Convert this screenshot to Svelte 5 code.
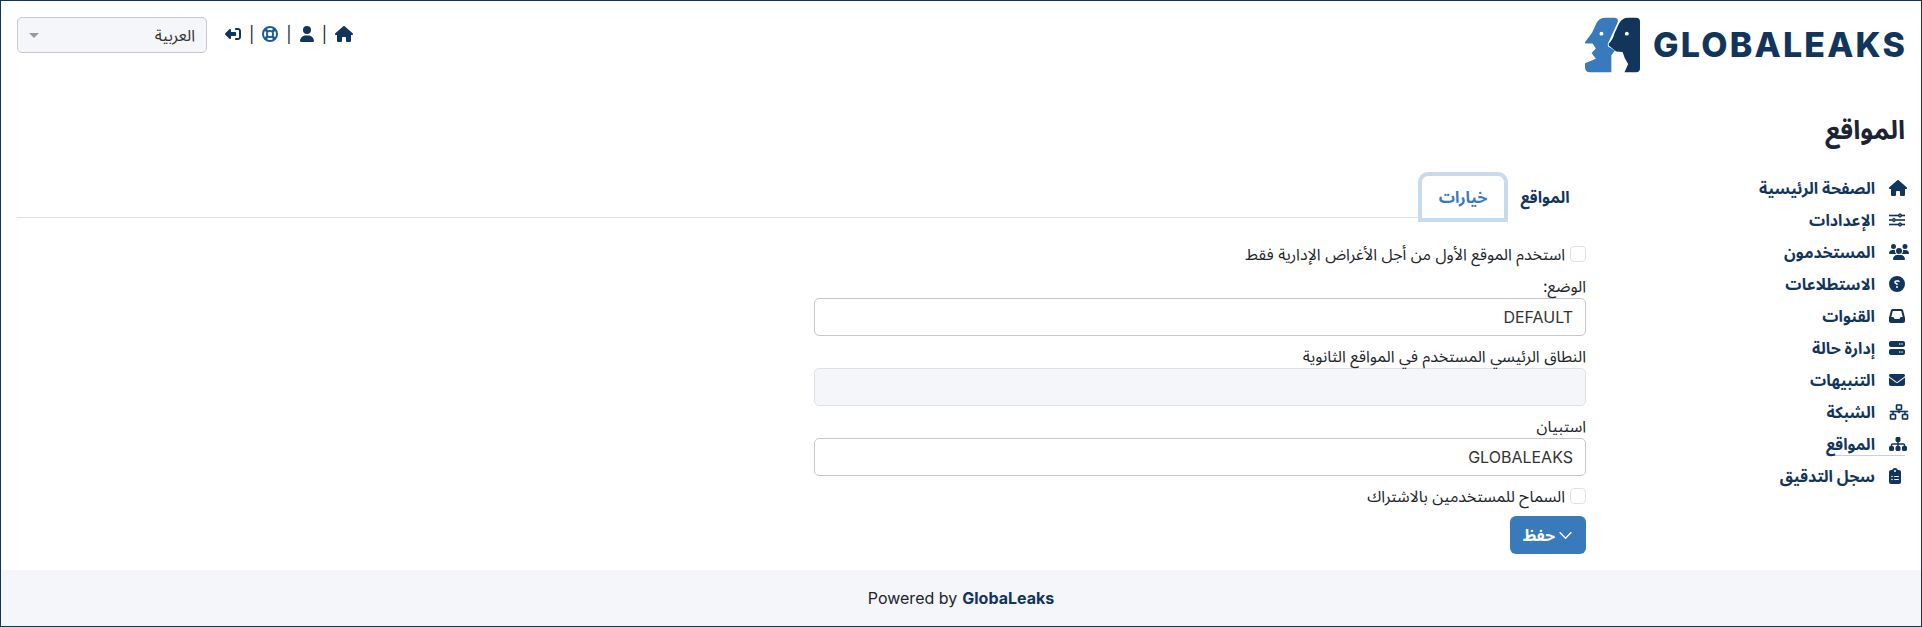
<script>
	const icons = {
		home: {vb: '0 0 576 512', d: 'M575.8 255.5c0 18-15 32.1-32 32.1h-32l.7 160.2c0 2.7-.2 5.4-.5 8.1V472c0 22.1-17.9 40-40 40H392c-22.1 0-40-17.9-40-40V384c0-17.7-14.3-32-32-32H256c-17.7 0-32 14.3-32 32v88c0 22.1-17.9 40-40 40H104c-22.1 0-40-17.9-40-40V287.6H32c-18 0-32-14-32-32.1c0-9 3-17 10-24L266.4 8c7-7 15-8 22-8s15 2 21 7L564.8 231.5c8 7 12 15 11 24z'},
		user: {vb: '0 0 448 512', d: 'M224 256A128 128 0 1 0 224 0a128 128 0 1 0 0 256zm-45.7 48C79.8 304 0 383.8 0 482.3C0 498.7 13.3 512 29.7 512H418.3c16.4 0 29.7-13.3 29.7-29.7C448 383.8 368.2 304 269.7 304H178.3z'},
		envelope: {vb: '0 0 512 512', d: 'M48 64C21.5 64 0 85.5 0 112c0 15.1 7.1 29.3 19.2 38.4L236.8 313.6c11.4 8.5 27 8.5 38.4 0L492.8 150.4c12.1-9.1 19.2-23.3 19.2-38.4c0-26.5-21.5-48-48-48H48zM0 176V384c0 35.3 28.7 64 64 64H448c35.3 0 64-28.7 64-64V176L294.4 339.2c-22.8 17.1-54 17.1-76.8 0L0 176z'},
		signin: {vb: '0 0 512 512', d: 'M138 105L10 233c-13 13-13 33 0 46l128 128c9 9 23 12 35 7s20-17 20-30V320h130c18 0 32-14 32-32V224c0-18-14-32-32-32H193V128c0-13-8-25-20-30s-26-2-35 7zM352 64h64c53 0 96 43 96 96V352c0 53-43 96-96 96H352c-18 0-32-14-32-32s14-32 32-32h64c18 0 32-14 32-32V160c0-18-14-32-32-32H352c-18 0-32-14-32-32s14-32 32-32z'},
		lifering: {vb: '0 0 512 512', d: 'M256 0a256 256 0 1 0 0 512A256 256 0 1 0 256 0zm0 64c37 0 71 10 100 29l-47 47c-16-8-34-12-53-12s-37 4-53 12l-47-47c29-19 63-29 100-29zM93 156l47 47c-8 16-12 34-12 53s4 37 12 53l-47 47C74 327 64 293 64 256s10-71 29-100zm326 0c19 29 29 63 29 100s-10 71-29 100l-47-47c8-16 12-34 12-53s-4-37-12-53l47-47zM256 184a72 72 0 1 1 0 144 72 72 0 1 1 0-144zm-53 188c16 8 34 12 53 12s37-4 53-12l47 47c-29 19-63 29-100 29s-71-10-100-29l47-47z'},
		sliders: {vb: '0 0 512 512', thick: true, d: 'M0 96h300a56 56 0 0 1 108 0h104v32H408a56 56 0 0 1-108 0H0V96zm354-8a24 24 0 1 0 0 48 24 24 0 1 0 0-48zM0 240h104a56 56 0 0 1 108 0h300v32H212a56 56 0 0 1-108 0H0v-32zm158-8a24 24 0 1 0 0 48 24 24 0 1 0 0-48zM0 384h300a56 56 0 0 1 108 0h104v32H408a56 56 0 0 1-108 0H0v-32zm354-8a24 24 0 1 0 0 48 24 24 0 1 0 0-48z'},
		users: {vb: '0 0 640 512', d: 'M144 0a80 80 0 1 1 0 160A80 80 0 1 1 144 0zM512 0a80 80 0 1 1 0 160A80 80 0 1 1 512 0zM0 298.700C0 239.800 47.800 192 106.700 192h42.700c15.900 0 31 3.500 44.600 9.700c-1.300 7.200-1.900 14.700-1.900 22.300c0 38.200 16.800 72.500 43.300 96H21.300C9.600 320 0 310.400 0 298.700zM405.300 320c26.500-23.500 43.300-57.800 43.300-96c0-7.600-.7-15-1.900-22.300c13.600-6.300 28.700-9.700 44.600-9.700h42.700C592.200 192 640 239.800 640 298.700c0 11.800-9.600 21.300-21.300 21.300H405.300zM224 224a96 96 0 1 1 192 0 96 96 0 1 1-192 0zM128 485.300C128 411.700 187.700 352 261.300 352H378.700C452.300 352 512 411.700 512 485.300c0 14.700-11.900 26.700-26.700 26.700H154.700c-14.700 0-26.700-11.900-26.700-26.700z'},
		question: {vb: '0 0 512 512', mirror: true, d: 'M256 512A256 256 0 1 0 256 0a256 256 0 1 0 0 512zM170 170c8-22 29-37 53-37h58c35 0 63 28 63 63c0 23-12 44-32 55l-32 19c0 13-11 24-24 24c-13 0-24-11-24-24V256c0-9 5-17 12-21l44-25c5-3 8-8 8-14c0-9-7-16-16-16H223c-3 0-6 2-8 5l-1 1c-4 13-18 19-30 15s-19-18-15-30zM224 352a32 32 0 1 1 64 0 32 32 0 1 1-64 0z'},
		inbox: {vb: '0 0 512 512', d: 'M121 32C91 32 66 52 59 81L1 314c-1 5-1 10-1 15V416c0 35 29 64 64 64H448c35 0 64-29 64-64V329c0-5-1-10-2-15L453 81c-7-29-33-49-62-49H121zm0 64H391l48 192H387c-12 0-23 7-29 18l-14 28c-6 11-17 18-29 18H197c-12 0-23-7-29-18l-14-28c-6-11-17-18-29-18H73L121 96z'},
		server: {vb: '0 0 512 512', d: 'M64 32C29 32 0 61 0 96v64c0 35 29 64 64 64H448c35 0 64-29 64-64V96c0-35-29-64-64-64H64zm280 72a24 24 0 1 1 0 48 24 24 0 1 1 0-48zm48 24a24 24 0 1 1 48 0 24 24 0 1 1-48 0zM64 288c-35 0-64 29-64 64v64c0 35 29 64 64 64H448c35 0 64-29 64-64V352c0-35-29-64-64-64H64zm280 72a24 24 0 1 1 0 48 24 24 0 1 1 0-48zm48 24a24 24 0 1 1 48 0 24 24 0 1 1-48 0z'},
		network: {vb: '0 0 640 512', thick: true, d: 'M256 16h128c18 0 32 14 32 32v112c0 18-14 32-32 32H336v32H592c9 0 16 7 16 16s-7 16-16 16H528v64h48c18 0 32 14 32 32v112c0 18-14 32-32 32H448c-18 0-32-14-32-32V352c0-18 14-32 32-32h48V256H336v32h-32V256H144v64h48c18 0 32 14 32 32v112c0 18-14 32-32 32H64c-18 0-32-14-32-32V352c0-18 14-32 32-32h48V256H48c-9 0-16-7-16-16s7-16 16-16H304V192H256c-18 0-32-14-32-32V48c0-18 14-32 32-32zm0 32v112H384V48H256zM64 352v112H192V352H64zm384 0v112H576V352H448z'},
		sitemap: {vb: '0 0 576 512', d: 'M208 80c0-26.500 21.500-48 48-48h64c26.500 0 48 21.500 48 48v64c0 26.500-21.500 48-48 48h-8v40H464c30.900 0 56 25.100 56 56v32h8c26.500 0 48 21.500 48 48v64c0 26.500-21.500 48-48 48H464c-26.500 0-48-21.500-48-48V368c0-26.500 21.500-48 48-48h8V288c0-4.400-3.600-8-8-8H312v40h8c26.500 0 48 21.500 48 48v64c0 26.500-21.500 48-48 48H256c-26.500 0-48-21.500-48-48V368c0-26.500 21.500-48 48-48h8V280H112c-4.400 0-8 3.600-8 8v32h8c26.500 0 48 21.500 48 48v64c0 26.500-21.500 48-48 48H48c-26.500 0-48-21.500-48-48V368c0-26.500 21.500-48 48-48h8V288c0-30.900 25.100-56 56-56H264V192h-8c-26.500 0-48-21.500-48-48V80z'},
		clipboard: {vb: '0 0 384 512', d: 'M192 0c-41.800 0-77.400 26.700-90.500 64H64C28.700 64 0 92.700 0 128V448c0 35.300 28.700 64 64 64H320c35.300 0 64-28.700 64-64V128c0-35.300-28.700-64-64-64H282.500C269.400 26.700 233.800 0 192 0zm0 64a32 32 0 1 1 0 64 32 32 0 1 1 0-64zM72 272a24 24 0 1 1 48 0 24 24 0 1 1-48 0zm104-16H304c8.800 0 16 7.200 16 16s-7.200 16-16 16H176c-8.800 0-16-7.200-16-16s7.200-16 16-16zM72 368a24 24 0 1 1 48 0 24 24 0 1 1-48 0zm88 0c0-8.800 7.200-16 16-16H304c8.800 0 16 7.200 16 16s-7.200 16-16 16H176c-8.800 0-16-7.200-16-16z'}
	};

	const navItems = [
		{label: 'الصفحة الرئيسية', icon: 'home'},
		{label: 'الإعدادات', icon: 'sliders'},
		{label: 'المستخدمون', icon: 'users'},
		{label: 'الاستطلاعات', icon: 'question'},
		{label: 'القنوات', icon: 'inbox'},
		{label: 'إدارة حالة', icon: 'server'},
		{label: 'التنبيهات', icon: 'envelope'},
		{label: 'الشبكة', icon: 'network'},
		{label: 'المواقع', icon: 'sitemap', active: true},
		{label: 'سجل التدقيق', icon: 'clipboard'}
	];

	const topLinks = ['home', 'user', 'lifering', 'signin'];
</script>

{#snippet icon(name, cls)}
	<svg class={cls} class:thick={icons[name].thick} class:mirror={icons[name].mirror} viewBox={icons[name].vb} aria-hidden="true"><path d={icons[name].d} /></svg>
{/snippet}

<div class="page" dir="rtl">
	<header class="header">
		<div class="logo" dir="ltr">
			<svg class="mark" viewBox="15 22 167 165" aria-hidden="true">
				<path fill="#387abb" d="M78 22H104Q118 22 114 36L88 92Q78 108 92 113L106 121 95 136V187H30Q15 187 15 172V160L48 146 35 129 48 115 38 100H19Q12 100 17 93L36 68 50 38Q58 22 78 22Z" />
				<path fill="#12355b" d="M146 22H170Q182 22 182 34V175Q182 187 170 187H135L146 162 136 145 129 126 110 124 87 106V100Q100 88 104 70L118 40Q128 22 146 22Z" />
				<circle fill="#fff" cx="65" cy="70" r="6" />
				<circle fill="#fff" cx="142" cy="70" r="6" />
			</svg>
			<span class="wordmark">GLOBALEAKS</span>
		</div>
		<div class="toolbar">
			<nav class="top-links">
				{#each topLinks as link, i}
					{#if i > 0}<span class="sep">|</span>{/if}
					{@render icon(link, link === 'lifering' ? 'top-icon ring' : 'top-icon')}
				{/each}
			</nav>
			<div class="lang">
				<span>العربية</span>
				<span class="caret"></span>
			</div>
		</div>
	</header>

	<div class="layout">
		<aside class="sidebar">
			<h1>المواقع</h1>
			<ul>
				{#each navItems as item}
					<li class:active={item.active}>
						<span class="nav-icon">{@render icon(item.icon, 'side-icon')}</span>
						<span>{item.label}</span>
					</li>
				{/each}
			</ul>
		</aside>

		<main class="content">
			<div class="tabs">
				<div class="tab">المواقع</div>
				<div class="tab current">خيارات</div>
			</div>

			<div class="form">
				<label class="check"><span class="box"></span>استخدم الموقع الأول من أجل الأغراض الإدارية فقط</label>
				<div class="group">
					<div class="field-label">الوضع:</div>
					<div class="input">DEFAULT</div>
				</div>
				<div class="group">
					<div class="field-label">النطاق الرئيسي المستخدم في المواقع الثانوية</div>
					<div class="input disabled"></div>
				</div>
				<div class="group">
					<div class="field-label">استبيان</div>
					<div class="input">GLOBALEAKS</div>
				</div>
				<label class="check second"><span class="box"></span>السماح للمستخدمين بالاشتراك</label>
				<button class="save">
					<svg class="chev" viewBox="0 0 16 10" aria-hidden="true"><path d="M1.500 1.500 8 8l6.500-6.500" /></svg>
					<span>حفظ</span>
				</button>
			</div>
		</main>
	</div>

	<footer class="footer" dir="ltr"><span>Powered by</span> <b>GlobaLeaks</b></footer>
</div>

<style>
	:global(body) {
		margin: 0;
		background: #fff;
	}

	.page {
		box-sizing: border-box;
		height: 627px;
		border: 1px solid #0f3659;
		display: flex;
		flex-direction: column;
		font-family: Inter, "Noto Sans Arabic", "Noto Sans", sans-serif;
		font-size: 16px;
		line-height: 24px;
		color: #212529;
		overflow: hidden;
	}

	.header {
		display: flex;
		justify-content: space-between;
		align-items: flex-start;
		padding: 16px 16px 0;
		height: 95px;
		box-sizing: border-box;
	}

	.logo {
		display: flex;
		align-items: center;
		gap: 13px;
		width: 320px;
	}

	.mark {
		width: 55px;
		height: 56px;
		flex: none;
	}

	.wordmark {
		font-family: Inter, sans-serif;
		font-weight: 800;
		font-size: 34px;
		letter-spacing: 2.200px;
		color: #12355b;
		line-height: 56px;
		white-space: nowrap;
	}

	.toolbar {
		display: flex;
		align-items: flex-start;
		gap: 18px;
	}

	.top-links {
		display: flex;
		align-items: center;
		gap: 8px;
		height: 34px;
		color: #12355b;
	}

	.sep {
		color: #212529;
	}

	.top-icon {
		height: 16px;
		fill: #12355b;
		width: auto;
		display: block;
	}

	.ring {
		fill: #1d5a92;
	}

	.lang {
		width: 190px;
		height: 36px;
		box-sizing: border-box;
		border: 1px solid #c8c8c8;
		border-radius: 5px;
		background: #f4f6fa;
		display: flex;
		align-items: center;
		justify-content: space-between;
		padding: 0 11px;
		color: #333;
	}

	.caret {
		width: 0;
		height: 0;
		border-left: 5px solid transparent;
		border-right: 5px solid transparent;
		border-top: 5px solid #999;
	}

	.layout {
		flex: 1;
		display: flex;
		align-items: flex-start;
	}

	.sidebar {
		width: 335px;
		box-sizing: border-box;
		padding-right: 16px;
		flex: none;
		color: #12355b;
	}

	h1 {
		font-size: 26px;
		line-height: 36px;
		font-weight: 700;
		margin: 16px 0 28px;
		color: #1c2333;
	}

	ul {
		list-style: none;
		margin: 0;
		padding: 0;
	}

	li {
		height: 24px;
		margin-bottom: 8px;
		display: flex;
		align-items: center;
		font-weight: 700;
		font-size: 16px;
		width: max-content;
		box-sizing: border-box;
	}

	li.active {
		box-shadow: inset 0 -1px 0 #c5cfe0;
	}

	.nav-icon {
		width: 16px;
		margin-left: 14px;
		display: flex;
		justify-content: flex-end;
		flex: none;
	}

	.side-icon {
		width: auto;
		height: 16px;
		fill: #12355b;
		display: block;
		flex: none;
	}

	.thick {
		stroke: #12355b;
		stroke-width: 20;
	}

	.mirror {
		transform: scaleX(-1);
	}

	.content {
		flex: 1;
		padding: 0 0 0 16px;
		min-width: 0;
	}

	.tabs {
		display: flex;
		margin-top: 80px;
		border-bottom: 1px solid #dee2e6;
		height: 41px;
	}

	.tab {
		width: 82px;
		height: 42px;
		box-sizing: border-box;
		display: flex;
		align-items: center;
		justify-content: center;
		font-weight: 700;
		color: #12355b;
		background: #fff;
	}

	.tab.current {
		color: #387abb;
		border-radius: 6px 6px 0 0;
		box-shadow: 0 0 0 4px #c7dbed;
	}

	.form {
		padding-top: 24px;
		display: flex;
		flex-direction: column;
		align-items: flex-start;
	}

	.check {
		display: flex;
		align-items: center;
		gap: 5px;
		height: 24px;
		margin-bottom: 8px;
	}

	.box {
		width: 16px;
		height: 16px;
		border: 1px solid #dee2e6;
		border-radius: 4px;
		background: #fff;
		box-sizing: border-box;
	}

	.group {
		margin-bottom: 8px;
		width: 772px;
	}

	.input {
		height: 38px;
		box-sizing: border-box;
		border: 1px solid #c8c8c8;
		border-radius: 5px;
		padding: 0 12px;
		line-height: 36px;
		color: #333;
		background: #fff;
	}

	.input.disabled {
		background: #f4f6fa;
		border-color: #dee2e6;
	}

	.save {
		width: 76px;
		height: 38px;
		border: 0;
		border-radius: 6px;
		background: #387abb;
		color: #fff;
		font: inherit;
		font-weight: 700;
		display: flex;
		align-items: center;
		gap: 3px;
		padding: 0 13px;
	}

	.chev {
		width: 15px;
		height: 9px;
		flex: none;
		fill: none;
		stroke: #fff;
		stroke-width: 1.500;
	}

	.footer {
		height: 56px;
		flex: none;
		background: #f4f6fa;
		display: flex;
		align-items: center;
		justify-content: center;
		gap: 5px;
		color: #212529;
	}

	.footer b {
		color: #12355b;
		font-weight: 700;
	}
</style>
